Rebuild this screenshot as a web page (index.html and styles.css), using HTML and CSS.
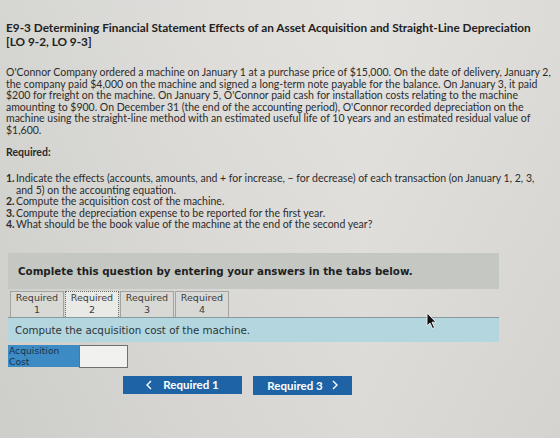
FILE: index.html
```html
<!DOCTYPE html>
<html lang="en">
<head>
<meta charset="utf-8">
<title>E9-3 Determining Financial Statement Effects</title>
<link rel="stylesheet" href="styles.css">
</head>
<body>
<main class="page">
  <h1 class="title">E9-3 Determining Financial Statement Effects of an Asset Acquisition and Straight-Line Depreciation<br>[LO 9-2, LO 9-3]</h1>

  <p class="intro">O'Connor Company ordered a machine on January 1 at a purchase price of $15,000. On the date of delivery, January 2,<br>the company paid $4,000 on the machine and signed a long-term note payable for the balance. On January 3, it paid<br>$200 for freight on the machine. On January 5, O'Connor paid cash for installation costs relating to the machine<br>amounting to $900. On December 31 (the end of the accounting period), O'Connor recorded depreciation on the<br>machine using the straight-line method with an estimated useful life of 10 years and an estimated residual value of<br>$1,600.</p>

  <p class="req-label">Required:</p>
  <ol class="req-list">
    <li><b>1.</b><span>Indicate the effects (accounts, amounts, and + for increase, &minus; for decrease) of each transaction (on January 1, 2, 3,<br>and 5) on the accounting equation.</span></li>
    <li><b>2.</b><span>Compute the acquisition cost of the machine.</span></li>
    <li><b>3.</b><span>Compute the depreciation expense to be reported for the first year.</span></li>
    <li><b>4.</b><span>What should be the book value of the machine at the end of the second year?</span></li>
  </ol>

  <section class="quiz">
    <div class="quiz-banner">Complete this question by entering your answers in the tabs below.</div>

    <div class="tabs">
      <div class="tab">Required<br>1</div>
      <div class="tab active">Required<br>2</div>
      <div class="tab">Required<br>3</div>
      <div class="tab">Required<br>4</div>
    </div>

    <div class="panel-prompt">Compute the acquisition cost of the machine.</div>

    <div class="answer-row">
      <div class="answer-label">Acquisition<br>Cost</div>
      <div class="answer-input"></div>
    </div>

    <div class="nav">
      <button class="nav-btn prev" type="button">
        <svg class="chev" viewBox="0 0 6 10" width="6" height="10"><polyline points="5,1 1,5 5,9"/></svg>
        <span>Required 1</span>
      </button>
      <button class="nav-btn next" type="button">
        <span>Required 3</span>
        <svg class="chev" viewBox="0 0 6 10" width="6" height="10"><polyline points="1,1 5,5 1,9"/></svg>
      </button>
    </div>
  </section>

  <!-- mouse pointer resting over the prompt bar -->
  <svg class="pointer" viewBox="0 0 12 18" width="12" height="18">
    <path d="M1 1 L1 14 L4 11 L6.5 16.5 L8.5 15.6 L6 10.2 L10 10.2 Z"/>
  </svg>
</main>
</body>
</html>
```

FILE: styles.css
```css
html, body {
  margin: 0;
  padding: 0;
}

body {
  width: 560px;
  height: 438px;
  overflow: hidden;
  background:
    linear-gradient(to bottom, rgba(255,255,255,0.04), rgba(0,0,0,0.03)),
    linear-gradient(to right, #d4d4d1 0%, #dddcd9 35%, #e2e1de 65%, #dbdad6 100%);
  color: #2a2a2a;
  font-family: Lato, "Open Sans", Arial, sans-serif;
}

.page {
  position: relative;
  padding: 21px 0 0 0;
}

.title {
  margin: 0 0 0 6px;
  font-size: 11.8px;
  line-height: 14px;
  font-weight: 700;
  color: #222;
}

.intro {
  margin: 18px 0 0 6px;
  font-size: 10.5px;
  line-height: 11.5px;
  color: #2c2c2c;
}

.req-label {
  margin: 10px 0 0 6px;
  font-size: 10.5px;
  line-height: 12px;
  font-weight: 700;
  color: #2a2a2a;
}

.req-list {
  list-style: none;
  margin: 15px 0 0 6px;
  padding: 0;
  font-size: 10.5px;
  line-height: 11.6px;
  color: #2c2c2c;
}

.req-list li {
  display: flex;
}

.req-list b {
  width: 10px;
  flex: none;
}

/* question widget */
.quiz {
  margin-top: 22px;
}

.quiz-banner {
  margin-left: 8px;
  width: 481px;
  height: 36px;
  padding-left: 10px;
  display: flex;
  align-items: center;
  background: #c5c7c3;
  font-family: "DejaVu Sans", Verdana, sans-serif;
  font-size: 10.3px;
  font-weight: 700;
  color: #1f1f1f;
}

.tabs {
  display: flex;
  gap: 1px;
  margin: 2px 0 0 10px;
}

.tab {
  width: 52px;
  height: 25px;
  border: 1px solid #a3a3a0;
  border-bottom: none;
  background: #d8d9d5;
  text-align: center;
  font-family: "DejaVu Sans", Verdana, sans-serif;
  font-size: 9.5px;
  line-height: 12px;
  color: #3c3c3c;
}

.tab.active {
  background: #e9e9e6;
  border: 1px dotted #6d6d6d;
  border-bottom: none;
}

.panel-prompt {
  margin-left: 8px;
  width: 484px;
  height: 24px;
  padding-left: 7px;
  display: flex;
  align-items: center;
  background: #b4d6df;
  border-top: 1px solid #8b999c;
  font-family: "DejaVu Sans", Verdana, sans-serif;
  font-size: 10.3px;
  color: #2b3538;
}

.answer-row {
  display: flex;
  margin: 3px 0 0 8px;
}

.answer-label {
  width: 70px;
  height: 22px;
  padding-left: 1px;
  background: #3d8bc5;
  font-family: "DejaVu Sans", Verdana, sans-serif;
  font-size: 9.2px;
  line-height: 11px;
  color: #17344f;
}

.answer-input {
  width: 47px;
  height: 21px;
  background: #f1f1ef;
  border: 1px solid #6f6f6c;
}

.nav {
  display: flex;
  gap: 11px;
  margin: 8px 0 0 123px;
}

.nav-btn {
  height: 18px;
  padding: 0;
  border: none;
  background: #1d63a5;
  color: #fff;
  display: flex;
  align-items: center;
  justify-content: center;
  gap: 9px;
  font-family: Lato, "Open Sans", Arial, sans-serif;
  font-size: 11.5px;
  font-weight: 700;
}

.nav-btn.prev {
  width: 119px;
  gap: 11px;
}

.nav-btn.next {
  width: 99px;
  height: 19px;
}

.chev {
  display: block;
}

.chev polyline {
  fill: none;
  stroke: #fff;
  stroke-width: 1.4;
}

.pointer {
  position: absolute;
  left: 426px;
  top: 312px;
}

.pointer path {
  fill: #111;
  stroke: #f4f4f4;
  stroke-width: 0.9;
}
```
